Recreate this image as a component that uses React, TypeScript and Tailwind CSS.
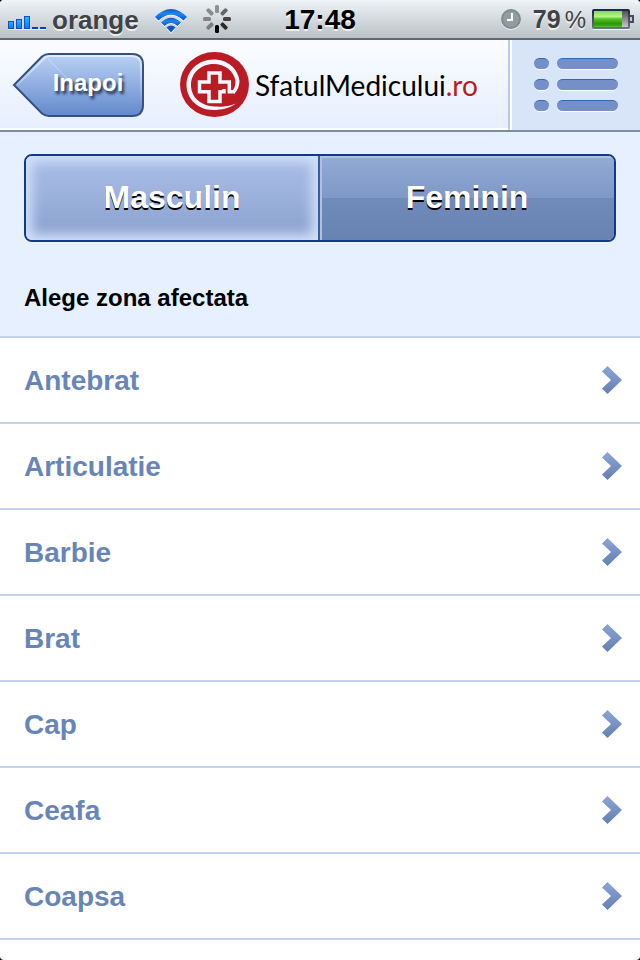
import { clsx } from 'clsx'
import { useState } from 'react'

const ZONES = ['Antebrat', 'Articulatie', 'Barbie', 'Brat', 'Cap', 'Ceafa', 'Coapsa']

const SPINNER = ['#000', '#2b2b2b', '#444', '#666', '#909090', '#8a8a8a', '#848484', '#7c7c7c']

function Signal() {
    return (
        <svg width="38" height="14" viewBox="0 0 38 14" aria-hidden="true">
            <defs>
                <linearGradient id="bar" x1="0" y1="0" x2="0" y2="1">
                    <stop offset="0" stopColor="#2fb4ff" />
                    <stop offset="1" stopColor="#0b7af0" />
                </linearGradient>
            </defs>
            <g fill="url(#bar)" stroke="#1450c0">
                <rect x="0.5" y="5.5" width="5" height="7" />
                <rect x="8.5" y="3.5" width="5" height="9" />
                <rect x="16.5" y="0.5" width="5" height="12" />
            </g>
            <path d="M24 11h6v2h-6zM32 11h6v2h-6z" fill="#0c3fc0" />
            <path d="M0 13h38v1H0z" fill="#fff" opacity="0.6" />
        </svg>
    )
}

function Wifi() {
    return (
        <svg width="32" height="25" viewBox="0 0 32 25" aria-hidden="true">
            <defs>
                <linearGradient id="wifi" x1="0" y1="0" x2="0" y2="1">
                    <stop offset="0" stopColor="#1557b8" />
                    <stop offset="0.4" stopColor="#1d86f2" />
                    <stop offset="1" stopColor="#0a55d8" />
                </linearGradient>
            </defs>
            <path d="M0 9Q16 -7 32 9L28.500 12.500Q16 0 3.500 12.500z" fill="#fff" />
            <path d="M0 8Q16 -8 32 8L28.500 11.500Q16 0 3.500 11.500z" fill="url(#wifi)" />
            <path d="M6 14.500Q16 5 26 14.500L22.500 18Q16 11.500 9.500 18z" fill="#fff" />
            <path d="M6 13.500Q16 4 26 13.500L22.500 17Q16 11 9.500 17z" fill="url(#wifi)" />
            <path d="M11.500 19.500Q16 14.500 20.500 19.500L16 24.500z" fill="#fff" />
            <path d="M11.500 18.500Q16 14.500 20.500 18.500L16 23.500z" fill="#0e55cc" />
        </svg>
    )
}

function Spinner() {
    return (
        <svg width="28" height="28" viewBox="-14 -14 28 28" aria-hidden="true">
            {SPINNER.map((color, i) => (
                <rect key={color} x="-2" y="6" width="4" height="8" rx="1.500" fill={color} transform={`rotate(${i * -45})`} />
            ))}
        </svg>
    )
}

function Clock() {
    return (
        <svg width="20" height="21" viewBox="0 0 20 21" aria-hidden="true">
            <circle cx="10" cy="11" r="10" fill="#fff" opacity="0.7" />
            <circle cx="10" cy="10" r="10" fill="#7f8c8c" />
            <circle cx="10" cy="10" r="8" fill="#929e9e" />
            <path d="M11 4v7H6" fill="none" stroke="#fff" strokeWidth="2" />
        </svg>
    )
}

function Battery() {
    return (
        <svg width="42" height="21" viewBox="0 0 42 21" aria-hidden="true">
            <defs>
                <linearGradient id="charge" x1="0" y1="0" x2="0" y2="1">
                    <stop offset="0" stopColor="#7fdc5a" />
                    <stop offset="0.35" stopColor="#b5f58c" />
                    <stop offset="0.5" stopColor="#52c424" />
                    <stop offset="0.8" stopColor="#2c9408" />
                    <stop offset="1" stopColor="#4fbb24" />
                </linearGradient>
                <linearGradient id="empty" x1="0" y1="0" x2="0" y2="1">
                    <stop offset="0" stopColor="#4a4a4c" />
                    <stop offset="1" stopColor="#cfcfd2" />
                </linearGradient>
                <linearGradient id="shell" x1="0" y1="0" x2="0" y2="1">
                    <stop offset="0" stopColor="#23263c" />
                    <stop offset="1" stopColor="#6a7088" />
                </linearGradient>
            </defs>
            <path d="M1 20h37v1H1z" fill="#fff" opacity="0.8" />
            <rect x="1" y="1" width="36" height="18" rx="1" fill="url(#empty)" stroke="url(#shell)" strokeWidth="2" />
            <rect x="2" y="2" width="28" height="16" fill="url(#charge)" />
            <path d="M38 7h3v6h-3" fill="#c5cace" stroke="#454b60" strokeWidth="2" />
        </svg>
    )
}

function StatusBar() {
    return (
        <div className="relative flex h-10 items-center justify-between border-b-2 border-[#5f686d] bg-linear-to-b from-[#eef3f6] to-[#bac2c6] pr-1.5 pl-2 font-bold text-[#404346] [text-shadow:0_2px_0_rgb(255_255_255/0.7)]">
            <div className="flex items-center">
                <span className="mt-2"><Signal /></span>
                <span className="ml-1.5 pt-0.5 text-[26px]">orange</span>
                <span className="mt-1 ml-4"><Wifi /></span>
                <span className="ml-4"><Spinner /></span>
            </div>
            <span className="absolute inset-x-0 pt-0.5 text-center text-[28px] text-black">17:48</span>
            <div className="flex items-center">
                <Clock />
                <span className="ml-3 pt-0.5 text-[25px]">79</span>
                <span className="ml-1 pt-0.5 text-2xl font-normal">%</span>
                <span className="ml-1.5"><Battery /></span>
            </div>
        </div>
    )
}

function BackButton() {
    return (
        <button type="button" className="relative ml-3 h-16 w-[132px] pr-1 pb-1 pl-6 text-2xl font-bold text-white [text-shadow:2px_3px_3px_#1f3050]">
            <svg className="absolute inset-0" width="132" height="64" viewBox="0 0 132 64" aria-hidden="true">
                <defs>
                    <linearGradient id="back" x1="0" y1="0" x2="0" y2="1">
                        <stop offset="0" stopColor="#bcd2f5" />
                        <stop offset="1" stopColor="#6389cc" />
                    </linearGradient>
                    <linearGradient id="shine" x1="0" y1="0" x2="0" y2="1">
                        <stop offset="0" stopColor="#fff" stopOpacity="0.6" />
                        <stop offset="1" stopColor="#fff" stopOpacity="0" />
                    </linearGradient>
                </defs>
                <path d="M2 32L30 3.500Q33 1 37 1H120Q131 1 131 12V52Q131 63 120 63H37Q33 63 30 60.500z" fill="url(#back)" stroke="#34517f" strokeWidth="2" />
                <path d="M5 32L32 5.500Q34 3 38 3H120Q129 3 129 12V50" fill="none" stroke="url(#shine)" strokeWidth="2" />
                <path d="M36 6L58 28" stroke="#fff" strokeWidth="1" opacity="0.35" />
            </svg>
            <span className="relative">Inapoi</span>
        </button>
    )
}

function Logo() {
    return (
        <a href="#" className="ml-9 flex flex-1 items-center gap-1.5 font-[Lato,sans-serif] text-[28px] text-black">
            <svg width="69" height="66" viewBox="0 0 69 66" aria-hidden="true">
                <ellipse cx="34.500" cy="32.500" rx="34.500" ry="32.500" fill="#b91c22" />
                {/* Swirl, thinning out at the lower right */}
                <path
                    d="M54.500 41.500Q59.500 36 59.500 29C58 16 47 7.500 33.500 7.500C18 7.500 6.500 19 6.500 33C6.500 47 18 58 33 58C42 58 50 56 56 51.500C49 54.500 42 55 35 54.500C21 54 11 45.500 11 33C11 21 21 12 33.500 12C45 12 54 19 55.500 29Q55.500 35 53 38z"
                    fill="#f4f7ff"
                />
                <path
                    d="M55 39.700H49.300V30H40V21H29V30H19.500V39.700H29V49.500H40V39.700H44V37"
                    fill="none"
                    stroke="#f4f7ff"
                    strokeWidth="3.500"
                />
            </svg>
            <span>SfatulMedicului<span className="text-[#b91c22]">.ro</span></span>
        </a>
    )
}

function MenuButton() {
    return (
        <button type="button" aria-label="Meniu" className="flex w-[132px] flex-col gap-2.5 self-stretch border-l-2 border-[#b9cbeb] bg-[#d8e4f8] pt-[18px] pl-6 shadow-[inset_2px_0_0_#fff]">
            {[0, 1, 2].map((row) => (
                <span key={row} className="flex gap-2">
                    <span className="h-[11px] w-[15px] rounded-full border-t border-[#2f68b4] bg-[#7590c8] shadow-[0_1px_0_#fff]" />
                    <span className="h-[11px] w-[61px] rounded-full border-t border-[#2f68b4] bg-[#7590c8] shadow-[0_1px_0_#fff]" />
                </span>
            ))}
        </button>
    )
}

function Chevron() {
    return (
        <svg width="20" height="28" viewBox="0 0 20 28" aria-hidden="true">
            <defs>
                <linearGradient id="chevron" x1="0" y1="0" x2="0" y2="1">
                    <stop offset="0" stopColor="#8aa5d6" />
                    <stop offset="1" stopColor="#6580b0" />
                </linearGradient>
            </defs>
            <path d="M5.500 0L20 14L5.500 28L0 22.500L9 14L0 5.500z" fill="url(#chevron)" />
        </svg>
    )
}

export default function App() {
    const [gender, setGender] = useState('Masculin')

    return (
        <div className="bg-black font-['Liberation_Sans',Arial,sans-serif]">
            <div className="min-h-screen overflow-hidden rounded-[4px] bg-white">
                <StatusBar />

                <header className="flex h-[92px] items-center border-b-2 border-[#7c909c] bg-linear-to-b from-[#fafcff] to-[#e6effe] shadow-[inset_0_-2px_0_#fff]">
                    <BackButton />
                    <Logo />
                    <MenuButton />
                </header>

                <main>
                    <section className="border-b-2 border-[#c3d2ee] bg-[#e6f0ff] px-6 pt-[22px] pb-5">
                        {/* Gender switch */}
                        <div className="grid h-[88px] grid-cols-2 overflow-hidden rounded-lg border-2 border-[#133a84]">
                            {['Masculin', 'Feminin'].map((label) => (
                                <button
                                    key={label}
                                    type="button"
                                    aria-pressed={gender === label}
                                    onClick={() => setGender(label)}
                                    className={clsx(
                                        'pb-0.5 text-[32px] font-bold text-white [text-shadow:0_2px_0_#000] first:border-r-2 first:border-[#3d5c9c]',
                                        gender === label
                                            ? 'bg-linear-to-b from-[#a9bde6] via-[#9bb1dc] to-[#88a0cd] shadow-[inset_0_0_12px_6px_#d3e0fb]'
                                            : 'bg-[linear-gradient(#94aad6,#7f98c7_50%,#708bba_50%,#6882b1)] shadow-[inset_2px_2px_0_#b0c0e0]',
                                    )}
                                >
                                    {label}
                                </button>
                            ))}
                        </div>
                        <h1 className="mt-[38px] text-2xl leading-9 font-bold text-black">Alege zona afectata</h1>
                    </section>

                    <ul>
                        {ZONES.map((zone) => (
                            <li key={zone} className="border-b-2 border-[#c3d2ee]">
                                <a href="#" className="flex h-[84px] items-center justify-between pr-[18px] pl-6 text-[28px] font-bold text-[#6885b8]">
                                    <span className="pt-0.5">{zone}</span>
                                    <Chevron />
                                </a>
                            </li>
                        ))}
                    </ul>
                </main>
            </div>
        </div>
    )
}
